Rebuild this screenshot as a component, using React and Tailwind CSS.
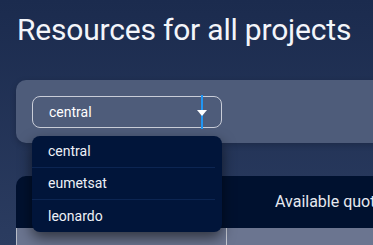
import React from 'react';

const projects = ['central', 'eumetsat', 'leonardo'];

export default function App() {
  return (
    <div
      className="relative h-[245px] w-[373px] overflow-hidden bg-gradient-to-b from-[#1b2b4e] to-[#2b3c60] pl-4 text-white"
      style={{ fontFamily: 'Roboto, "Liberation Sans", sans-serif' }}
    >
      <h1 className="pt-[12px] pl-[1px] text-[30px] leading-[36px] font-normal tracking-[-0.2px] whitespace-nowrap text-[#f3f5fa]">
        Resources for all projects
      </h1>

      {/* project picker panel */}
      <div className="mt-[32px] -mr-8 rounded-l-[10px] bg-[#4e5c7a] px-4 pt-4 pb-[15px] shadow-[0_2px_6px_rgba(0,0,0,0.2)]">
        <div className="flex h-8 w-[190px] items-center rounded-lg border border-[#c9cdd8] pl-4 text-[14px] text-white">
          <span className="flex-1">central</span>
          <div className="relative mr-[18px] flex h-full w-[2px] items-center justify-center">
            <span className="h-[34px] w-[2px] shrink-0 bg-[#2196f3]" />
            <span className="absolute top-[13px] -left-[4px] h-0 w-0 border-x-[5px] border-t-[6px] border-x-transparent border-t-white" />
          </div>
        </div>
      </div>

      {/* quotas table */}
      <div className="mt-[33px] -mr-8 overflow-hidden rounded-tl-[10px]">
        <div className="flex h-[52px] items-center bg-[#00112f] pl-[259px] text-[16px] whitespace-nowrap text-[#e6e9f0]">
          Available quotas
        </div>
        <div className="flex h-10 border-l border-[#b8bdc9] bg-[#6b7590]">
          <div className="w-[210px] border-r border-[#c6cad4]" />
        </div>
      </div>

      {/* open dropdown */}
      <div className="absolute top-[136px] left-8 flex w-[190px] flex-col overflow-hidden rounded-lg bg-[#01153a] shadow-[0_6px_14px_rgba(0,0,0,0.55)]">
        {projects.map((p, i) => (
          <div
            key={p}
            className={`mr-[7px] flex h-8 items-center pl-4 text-[14px] text-[#eef1f7] ${i < projects.length - 1 ? 'border-b border-[#0c2552]' : ''}`}
          >
            {p}
          </div>
        ))}
      </div>
    </div>
  );
}
